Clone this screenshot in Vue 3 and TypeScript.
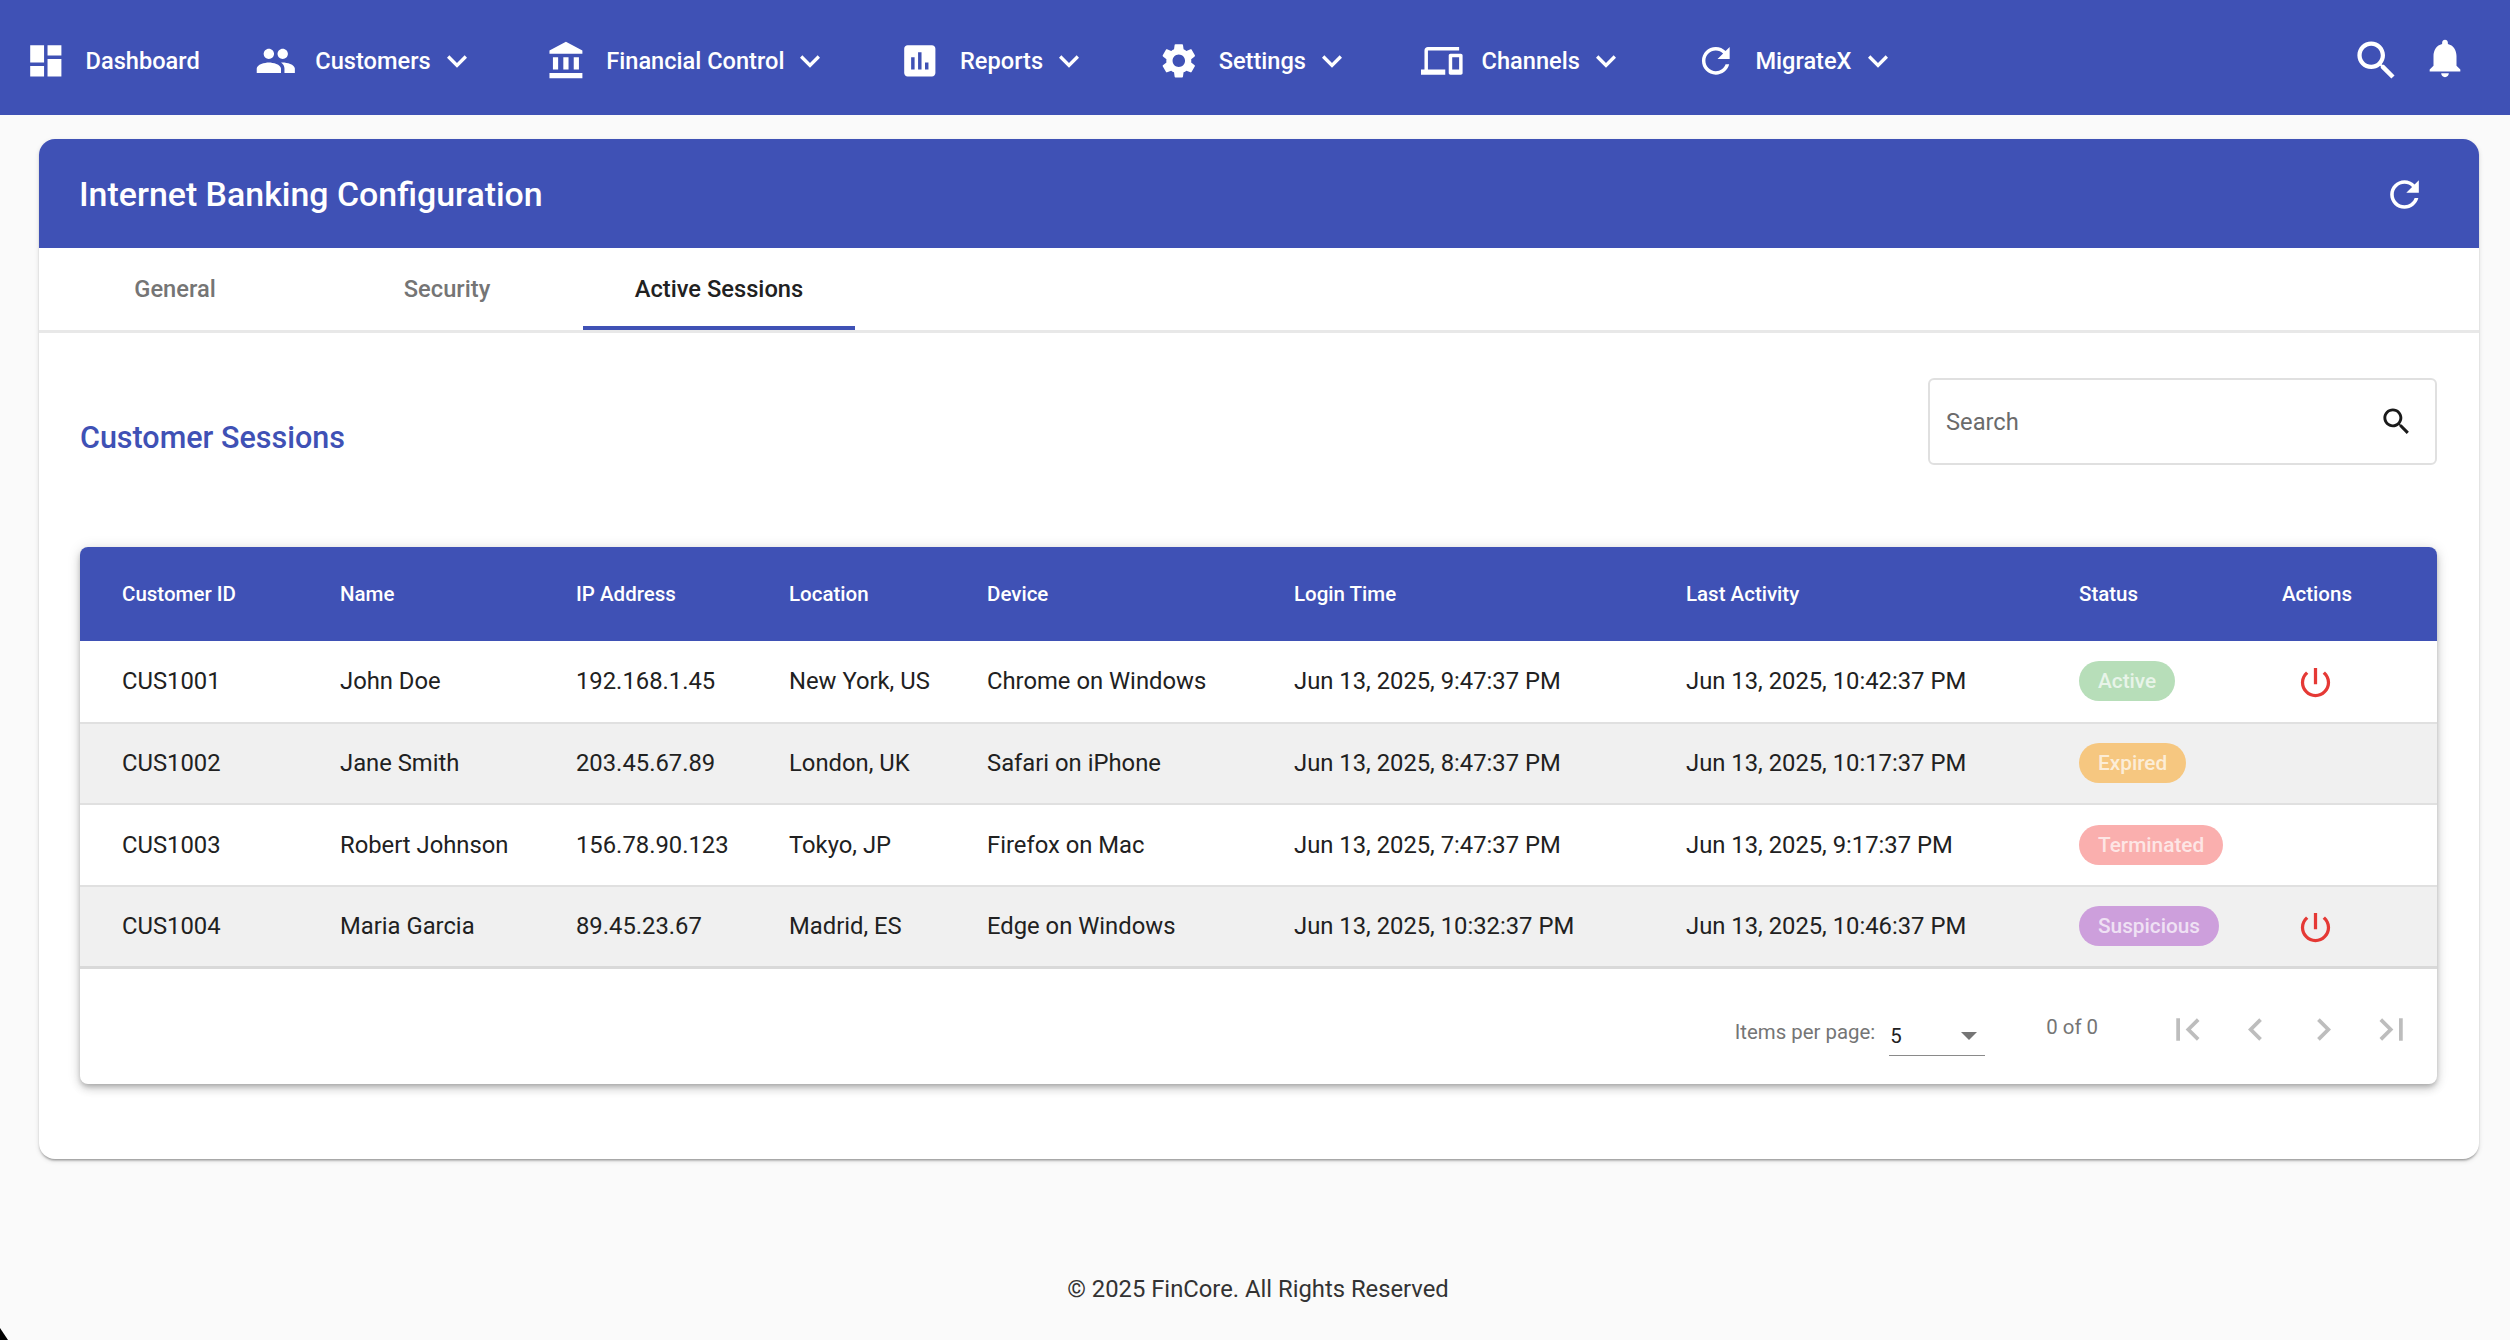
<script setup lang="ts">
interface NavItem {
  label: string
  icon: string
  menu: boolean
}

interface Session {
  id: string
  name: string
  ip: string
  location: string
  device: string
  login: string
  activity: string
  status: string
  canEnd: boolean
}

const icons = {
  dashboard: 'M3 13h8V3H3v10zm0 8h8v-6H3v6zm10 0h8V11h-8v10zm0-18v6h8V3h-8z',
  people: 'M16 11c1.66 0 2.99-1.34 2.99-3S17.66 5 16 5c-1.66 0-3 1.34-3 3s1.34 3 3 3zm-8 0c1.66 0 2.99-1.34 2.99-3S9.66 5 8 5C6.34 5 5 6.34 5 8s1.34 3 3 3zm0 2c-2.33 0-7 1.17-7 3.5V19h14v-2.5c0-2.33-4.67-3.5-7-3.5zm8 0c-.29 0-.62.02-.97.05 1.16.84 1.97 1.97 1.97 3.45V19h6v-2.5c0-2.33-4.67-3.5-7-3.5z',
  bank: 'M4 10v7h3v-7H4zm6 0v7h3v-7h-3zM2 22h19v-3H2v3zm14-12v7h3v-7h-3zm-4.5-9L2 6v2h19V6l-9.5-5z',
  reports: 'M19 3H5c-1.1 0-2 .9-2 2v14c0 1.1.9 2 2 2h14c1.1 0 2-.9 2-2V5c0-1.1-.9-2-2-2zM9 17H7v-7h2v7zm4 0h-2V7h2v10zm4 0h-2v-4h2v4z',
  settings: 'M19.14 12.94c.04-.3.06-.61.06-.94 0-.32-.02-.64-.07-.94l2.03-1.58c.18-.14.23-.41.12-.61l-1.92-3.32c-.12-.22-.37-.29-.59-.22l-2.39.96c-.5-.38-1.03-.7-1.62-.94l-.36-2.54c-.04-.24-.24-.41-.48-.41h-3.84c-.24 0-.43.17-.47.41l-.36 2.54c-.59.24-1.13.57-1.62.94l-2.39-.96c-.22-.08-.47 0-.59.22L2.74 8.87c-.12.21-.08.47.12.61l2.03 1.58c-.05.3-.09.63-.09.94s.02.64.07.94l-2.03 1.58c-.18.14-.23.41-.12.61l1.92 3.32c.12.22.37.29.59.22l2.39-.96c.5.38 1.03.7 1.62.94l.36 2.54c.05.24.24.41.48.41h3.84c.24 0 .44-.17.47-.41l.36-2.54c.59-.24 1.13-.56 1.62-.94l2.39.96c.22.08.47 0 .59-.22l1.92-3.32c.12-.22.07-.47-.12-.61l-2.01-1.58zM12 15.6c-1.98 0-3.6-1.62-3.6-3.6s1.62-3.6 3.6-3.6 3.6 1.62 3.6 3.6-1.62 3.6-3.6 3.6z',
  devices: 'M4 6h18V4H4c-1.1 0-2 .9-2 2v11H0v3h14v-3H4V6zm19 2h-6c-.55 0-1 .45-1 1v10c0 .55.45 1 1 1h6c.55 0 1-.45 1-1V9c0-.55-.45-1-1-1zm-1 9h-4v-7h4v7z',
  refresh: 'M17.65 6.35C16.2 4.9 14.21 4 12 4c-4.42 0-7.99 3.58-7.99 8s3.57 8 7.99 8c3.73 0 6.84-2.55 7.73-6h-2.08c-.82 2.33-3.04 4-5.65 4-3.31 0-6-2.69-6-6s2.69-6 6-6c1.66 0 3.14.69 4.22 1.78L13 11h7V4l-2.35 2.35z',
  search: 'M15.5 14h-.79l-.28-.27C15.41 12.59 16 11.11 16 9.5 16 5.91 13.09 3 9.5 3S3 5.91 3 9.5 5.91 16 9.5 16c1.61 0 3.09-.59 4.23-1.57l.27.28v.79l5 4.99L20.49 19l-4.99-5zm-6 0C7.01 14 5 11.99 5 9.5S7.01 5 9.5 5 14 7.01 14 9.5 11.99 14 9.5 14z',
  bell: 'M12 22c1.1 0 2-.9 2-2h-4c0 1.1.89 2 2 2zm6-6v-5c0-3.07-1.64-5.64-4.5-6.32V4c0-.83-.67-1.5-1.5-1.5s-1.5.67-1.5 1.5v.68C7.63 5.36 6 7.92 6 11v5l-2 2v1h16v-1l-2-2z',
  expand: 'M16.59 8.59L12 13.17 7.41 8.59 6 10l6 6 6-6z',
  power: 'M13 3h-2v10h2V3zm4.83 2.17l-1.42 1.42C17.99 7.86 19 9.81 19 12c0 3.87-3.13 7-7 7s-7-3.13-7-7c0-2.19 1.01-4.14 2.58-5.42L6.17 5.17C4.23 6.82 3 9.26 3 12c0 4.97 4.03 9 9 9s9-4.03 9-9c0-2.74-1.23-5.18-3.17-6.83z',
  first: 'M18.41 16.59L13.82 12l4.59-4.59L17 6l-6 6 6 6zM6 6h2v12H6z',
  prev: 'M15.41 7.41L14 6l-6 6 6 6 1.41-1.41L10.83 12z',
  next: 'M10 6L8.59 7.41 13.17 12l-4.58 4.59L10 18l6-6z',
  last: 'M5.59 7.41L10.18 12l-4.59 4.59L7 18l6-6-6-6zM16 6h2v12h-2z'
}

const navItems: NavItem[] = [
  { label: 'Dashboard', icon: icons.dashboard, menu: false },
  { label: 'Customers', icon: icons.people, menu: true },
  { label: 'Financial Control', icon: icons.bank, menu: true },
  { label: 'Reports', icon: icons.reports, menu: true },
  { label: 'Settings', icon: icons.settings, menu: true },
  { label: 'Channels', icon: icons.devices, menu: true },
  { label: 'MigrateX', icon: icons.refresh, menu: true }
]

const tabs = ['General', 'Security', 'Active Sessions']
const columns = ['Customer ID', 'Name', 'IP Address', 'Location', 'Device', 'Login Time', 'Last Activity', 'Status', 'Actions']
const pagerIcons = [icons.first, icons.prev, icons.next, icons.last]

const sessions: Session[] = [
  { id: 'CUS1001', name: 'John Doe', ip: '192.168.1.45', location: 'New York, US', device: 'Chrome on Windows', login: 'Jun 13, 2025, 9:47:37 PM', activity: 'Jun 13, 2025, 10:42:37 PM', status: 'Active', canEnd: true },
  { id: 'CUS1002', name: 'Jane Smith', ip: '203.45.67.89', location: 'London, UK', device: 'Safari on iPhone', login: 'Jun 13, 2025, 8:47:37 PM', activity: 'Jun 13, 2025, 10:17:37 PM', status: 'Expired', canEnd: false },
  { id: 'CUS1003', name: 'Robert Johnson', ip: '156.78.90.123', location: 'Tokyo, JP', device: 'Firefox on Mac', login: 'Jun 13, 2025, 7:47:37 PM', activity: 'Jun 13, 2025, 9:17:37 PM', status: 'Terminated', canEnd: false },
  { id: 'CUS1004', name: 'Maria Garcia', ip: '89.45.23.67', location: 'Madrid, ES', device: 'Edge on Windows', login: 'Jun 13, 2025, 10:32:37 PM', activity: 'Jun 13, 2025, 10:46:37 PM', status: 'Suspicious', canEnd: true }
]
</script>

<template>
  <div class="page">
    <header class="navbar">
      <nav class="nav-links">
        <a v-for="item in navItems" :key="item.label" class="nav-item" :class="{ plain: !item.menu }">
          <svg class="nav-icon" viewBox="0 0 24 24"><path :d="item.icon" /></svg>
          <span class="nav-label">{{ item.label }}</span>
          <svg v-if="item.menu" class="nav-chevron" viewBox="0 0 24 24"><path :d="icons.expand" /></svg>
        </a>
      </nav>
      <div class="nav-actions">
        <svg class="top-search" viewBox="0 0 24 24"><path :d="icons.search" /></svg>
        <svg class="top-bell" viewBox="0 0 24 24"><path :d="icons.bell" /></svg>
      </div>
    </header>

    <main class="content">
      <section class="card">
        <div class="card-head">
          <h1>Internet Banking Configuration</h1>
          <svg class="head-refresh" viewBox="0 0 24 24"><path :d="icons.refresh" /></svg>
        </div>

        <div class="tabs">
          <div v-for="(tab, i) in tabs" :key="tab" class="tab" :class="{ active: i === 2 }">{{ tab }}</div>
        </div>

        <div class="card-body">
          <div class="toolbar">
            <h2>Customer Sessions</h2>
            <div class="search-field">
              <span>Search</span>
              <svg viewBox="0 0 24 24"><path :d="icons.search" /></svg>
            </div>
          </div>

          <div class="table-wrap">
            <table>
              <thead>
                <tr>
                  <th v-for="col in columns" :key="col">{{ col }}</th>
                </tr>
              </thead>
              <tbody>
                <tr v-for="s in sessions" :key="s.id">
                  <td>{{ s.id }}</td>
                  <td>{{ s.name }}</td>
                  <td>{{ s.ip }}</td>
                  <td>{{ s.location }}</td>
                  <td>{{ s.device }}</td>
                  <td>{{ s.login }}</td>
                  <td>{{ s.activity }}</td>
                  <td><span class="badge" :class="s.status.toLowerCase()">{{ s.status }}</span></td>
                  <td>
                    <svg v-if="s.canEnd" class="power" viewBox="0 0 24 24"><path :d="icons.power" /></svg>
                  </td>
                </tr>
              </tbody>
            </table>

            <div class="paginator">
              <span class="per-page">Items per page:</span>
              <div class="page-select">
                <span>5</span>
                <i class="select-arrow"></i>
              </div>
              <span class="range">0 of 0</span>
              <div class="pager">
                <svg v-for="(p, i) in pagerIcons" :key="i" viewBox="0 0 24 24"><path :d="p" /></svg>
              </div>
            </div>
          </div>
        </div>
      </section>
    </main>

    <footer class="footer">© 2025 FinCore. All Rights Reserved</footer>
    <i class="corner-mark"></i>
  </div>
</template>

<style>
html,
body {
  margin: 0;
  background: #fafafa;
}
</style>

<style scoped>
.page {
  position: relative;
  height: 1340px;
  overflow: hidden;
  display: flex;
  flex-direction: column;
  background: #fafafa;
  font-family: Roboto, "Liberation Sans", sans-serif;
  color: #212121;
}

svg {
  display: block;
  flex: none;
  fill: currentColor;
}

.navbar {
  flex: none;
  height: 115px;
  display: flex;
  align-items: center;
  justify-content: space-between;
  padding: 0 42px 0 25px;
  box-sizing: border-box;
  background: #3f51b5;
  color: #fff;
}

.nav-links {
  display: flex;
  align-items: center;
  gap: 69px;
  padding-top: 7px;
}

.nav-item {
  display: flex;
  align-items: center;
}

.nav-item.plain {
  margin-right: -14px;
}

.nav-icon {
  width: 41.6px;
  height: 41.6px;
  margin-right: 19px;
}

.nav-label {
  font-size: 23.6px;
  font-weight: 500;
  white-space: nowrap;
}

.nav-chevron {
  width: 40px;
  height: 40px;
  margin-left: 6px;
}

.nav-actions {
  display: flex;
  align-items: center;
  gap: 20px;
}

.top-search {
  width: 51px;
  height: 51px;
  margin-top: 5px;
}

.top-bell {
  width: 46px;
  height: 46px;
}

.content {
  flex: none;
  padding: 24px 31px 0 39px;
}

.card {
  background: #fff;
  border-radius: 16px;
  box-shadow: 0 3px 2px -2px rgba(0, 0, 0, 0.2), 0 2px 2px 0 rgba(0, 0, 0, 0.14), 0 2px 5px 0 rgba(0, 0, 0, 0.12);
}

.card-head {
  height: 109px;
  display: flex;
  align-items: center;
  justify-content: space-between;
  padding: 0 53px 0 40px;
  background: #3f51b5;
  border-radius: 16px 16px 0 0;
  color: #fff;
}

.card-head h1 {
  margin: 1px 0 0;
  font-size: 33.9px;
  font-weight: 500;
}

.head-refresh {
  width: 43px;
  height: 43px;
  margin-top: 2px;
}

.tabs {
  height: 85px;
  display: flex;
  box-sizing: border-box;
  border-bottom: 3px solid #e8e8e8;
}

.tab {
  width: 272px;
  height: 82px;
  box-sizing: border-box;
  display: flex;
  align-items: center;
  justify-content: center;
  font-size: 23.7px;
  font-weight: 500;
  color: #757575;
}

.tab.active {
  color: #212121;
  box-shadow: inset 0 -4px 0 #3f51b5;
}

.card-body {
  padding: 45px 42px 75px 41px;
}

.toolbar {
  display: flex;
  align-items: center;
  justify-content: space-between;
  margin-bottom: 82px;
}

.toolbar h2 {
  margin: 32px 0 0;
  font-size: 30.5px;
  font-weight: 500;
  color: #3f51b5;
}

.search-field {
  width: 509px;
  height: 87px;
  box-sizing: border-box;
  display: flex;
  align-items: center;
  justify-content: space-between;
  padding: 0 21px 0 16px;
  border: 2px solid #e0e0e0;
  border-radius: 6px;
  font-size: 23.7px;
  color: #6b6b6b;
}

.search-field svg {
  width: 35px;
  height: 35px;
  color: #1a1a1a;
}

.table-wrap {
  border-radius: 8px;
  background: #fff;
  box-shadow: 0 3px 5px -1px rgba(0, 0, 0, 0.2), 0 5px 10px 0 rgba(0, 0, 0, 0.14), 0 1px 14px 0 rgba(0, 0, 0, 0.12);
}

table {
  width: 100%;
  table-layout: fixed;
  border-collapse: collapse;
}

th {
  height: 94px;
  padding: 0 0 0 42px;
  box-sizing: border-box;
  background: #3f51b5;
  color: #fff;
  font-size: 20.5px;
  font-weight: 500;
  text-align: left;
}

th:first-child {
  border-top-left-radius: 8px;
}

th:last-child {
  border-top-right-radius: 8px;
}

th:nth-child(1) { width: 218px; }
th:nth-child(2) { width: 236px; }
th:nth-child(3) { width: 213px; }
th:nth-child(4) { width: 198px; }
th:nth-child(5) { width: 307px; }
th:nth-child(6) { width: 392px; }
th:nth-child(7) { width: 393px; }
th:nth-child(8) { width: 203px; }

td {
  height: 81.5px;
  padding: 0 0 0 42px;
  box-sizing: border-box;
  border-bottom: 2px solid #e0e0e0;
  font-size: 23.8px;
  color: #212121;
  white-space: nowrap;
}

tbody tr:nth-child(even) td {
  background: #f0f0f0;
}

tbody tr:last-child td {
  border-bottom: 3px solid #d9d9d9;
}

.badge {
  display: inline-block;
  height: 40px;
  line-height: 40px;
  padding: 0 19px;
  border-radius: 20px;
  font-size: 20.8px;
  font-weight: 500;
  vertical-align: middle;
  color: rgba(255, 255, 255, 0.7);
}

.badge.active { background: #b7deb9; }
.badge.expired { background: #f6c780; }
.badge.terminated { background: #faafae; }
.badge.suspicious { background: #cd9fdc; }

.power {
  width: 39px;
  height: 39px;
  margin-left: 14px;
  margin-top: 3px;
  color: #e53935;
}

.paginator {
  height: 115px;
  display: flex;
  align-items: center;
  justify-content: flex-end;
  padding-right: 23px;
  font-size: 20.4px;
  color: #757575;
}

.per-page {
  margin-top: 11px;
  margin-right: 14px;
}

.page-select {
  width: 96px;
  height: 38px;
  margin-top: 21px;
  box-sizing: border-box;
  display: flex;
  align-items: center;
  justify-content: space-between;
  padding: 0 8px 0 1px;
  border-bottom: 1px solid #8a8a8a;
  color: #212121;
}

.select-arrow {
  width: 0;
  height: 0;
  border-left: 8px solid transparent;
  border-right: 8px solid transparent;
  border-top: 8px solid #757575;
}

.range {
  margin-left: 61px;
  margin-top: 1px;
  margin-right: 67px;
}

.pager {
  display: flex;
  gap: 23px;
  margin-top: 6px;
  color: rgba(0, 0, 0, 0.26);
}

.pager svg {
  width: 45px;
  height: 45px;
}

.footer {
  margin-top: 116px;
  padding-left: 6px;
  text-align: center;
  font-size: 23.8px;
  color: #333;
}

.corner-mark {
  position: absolute;
  left: 0;
  bottom: 0;
  width: 8px;
  height: 12px;
  background: #000;
  clip-path: polygon(0 0, 100% 100%, 0 100%);
}
</style>
